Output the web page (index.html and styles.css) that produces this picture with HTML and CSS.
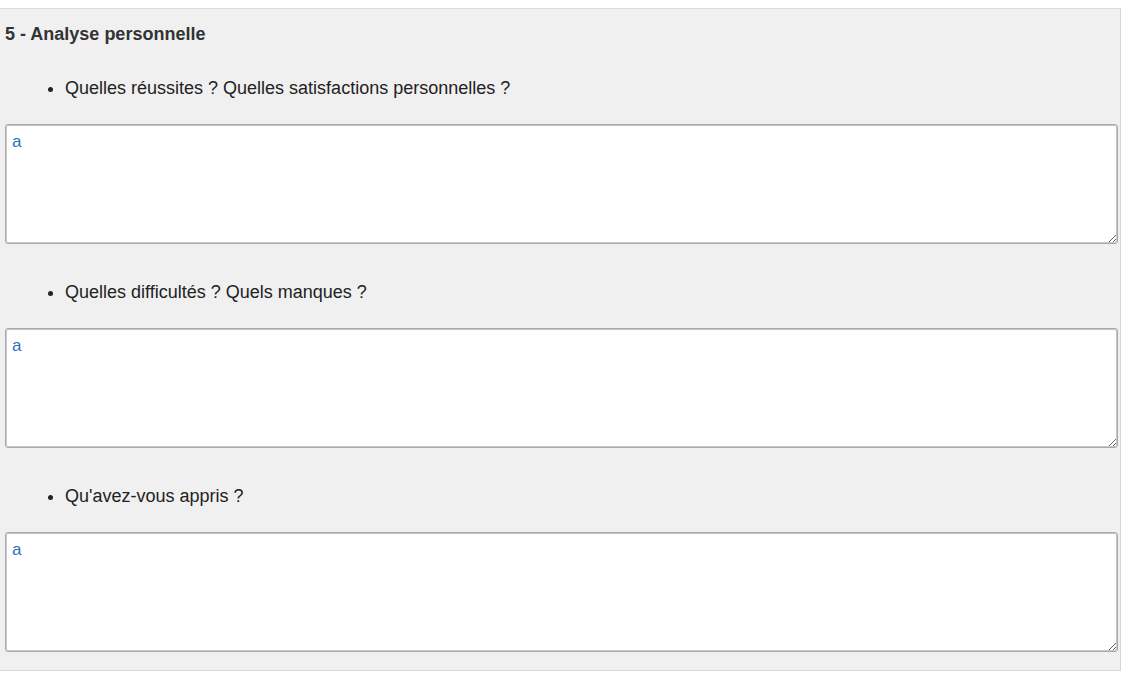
FILE: index.html
```html
<!DOCTYPE html>
<html lang="fr">
<head>
    <meta charset="UTF-8">
    <title>Analyse personnelle</title>
    <link rel="stylesheet" href="styles.css">
</head>
<body>
    <div class="panel">
        <h3 class="title">5 - Analyse personnelle</h3>

        <ul class="question">
            <li>Quelles réussites ? Quelles satisfactions personnelles ?</li>
        </ul>
        <textarea class="answer">a</textarea>

        <ul class="question">
            <li>Quelles difficultés ? Quels manques ?</li>
        </ul>
        <textarea class="answer">a</textarea>

        <ul class="question">
            <li>Qu'avez-vous appris ?</li>
        </ul>
        <textarea class="answer">a</textarea>
    </div>
</body>
</html>
```

FILE: styles.css
```css
body {
    margin: 0;
    background: #fff;
    font-family: "Liberation Sans", Arial, sans-serif;
    color: #333;
}
.panel {
    margin-top: 8px;
    width: 1115px;
    height: 661px;
    padding: 0 0 0 5px;
    background: #f0f0f0;
    border-top: 1px solid #dcdcdc;
    border-bottom: 1px solid #d6d6d6;
    border-right: 1px solid #d6d6d6;
    box-sizing: content-box;
}
.title {
    margin: 0;
    padding-top: 15px;
    font-size: 18px;
    line-height: 20px;
    font-weight: bold;
    color: #333;
}
.question {
    margin: 34px 0 26px;
    padding-left: 60px;
    font-size: 18px;
    line-height: 20px;
    color: #222;
}
.answer + .question {
    margin-top: 38px;
}
.answer {
    display: block;
    width: 1113px;
    height: 120px;
    margin: 0;
    padding: 8px 6px;
    box-sizing: border-box;
    border: 1px solid #a9a9a9;
    border-radius: 3px;
    box-shadow: inset 0 0 0 1px #c8c8c8, inset 0 1px 2px rgba(0, 0, 0, 0.08);
    background: #fff;
    font-family: "Liberation Sans", Arial, sans-serif;
    font-size: 17px;
    line-height: 18px;
    color: #2f6fbf;
}
```
